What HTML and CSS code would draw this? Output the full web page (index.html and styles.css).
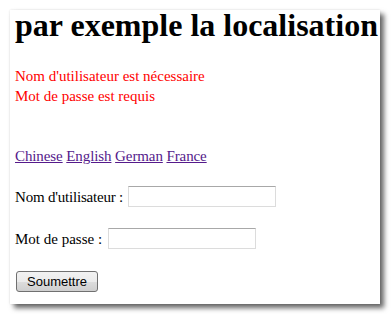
FILE: index.html
```html
<!DOCTYPE html>
<html>
<head>
<meta charset="utf-8">
<link rel="stylesheet" href="styles.css">
</head>
<body>
<div class="card">
  <h1 class="title">par exemple la localisation</h1>
  <div class="errors">
    <div>Nom d'utilisateur est nécessaire</div>
    <div>Mot de passe est requis</div>
  </div>
  <div class="langs">
    <a href="#">Chinese</a> <a href="#">English</a> <a href="#">German</a> <a href="#">France</a>
  </div>
  <form class="form">
    <div class="row row1"><label class="lbl lbl-user">Nom d'utilisateur :</label><input class="field" type="text"></div>
    <div class="row row2"><label class="lbl">Mot de passe :</label><input class="field" type="password"></div>
    <button class="submit" type="button">Soumettre</button>
  </form>
</div>
</body>
</html>
```

FILE: styles.css
```css
html, body {
  margin: 0;
  padding: 0;
  background: #ffffff;
}
body {
  padding: 10px;
  font-family: "Liberation Serif", "Times New Roman", serif;
  font-size: 15px;
  line-height: 20px;
  color: #000;
}
.card {
  width: 370px;
  height: 294px;
  box-sizing: border-box;
  background: #fff;
  padding: 0 0 0 5px;
  box-shadow: 4px 4px 5px rgba(0,0,0,0.6), 0 0 2px rgba(0,0,0,0.12);
  display: flex;
  flex-direction: column;
}
.title {
  margin: 0;
  font-size: 32px;
  line-height: 30px;
  font-weight: bold;
  white-space: nowrap;
}
.errors {
  margin-top: 26px;
  color: #ff0000;
}
.langs {
  margin-top: 40px;
  letter-spacing: -0.1px;
}
.langs a {
  color: #551a8b;
  text-decoration: underline;
}
.form {
  margin: 20px 0 0 0;
  display: flex;
  flex-direction: column;
  align-items: flex-start;
}
.row {
  display: flex;
  align-items: flex-start;
}
.row1 {
  gap: 5px;
}
.row2 {
  margin-top: 21px;
  gap: 6px;
}
.lbl {
  padding-top: 1px;
}
.lbl-user {
  letter-spacing: -0.2px;
}
.field {
  width: 148px;
  height: 21px;
  box-sizing: border-box;
  margin: 0;
  padding: 1px 2px;
  border: 1px solid #dcdcdc;
  border-top-color: #a8a8a8;
  font-family: "Liberation Sans", Arial, sans-serif;
  font-size: 13px;
  background: #fff;
}
.submit {
  margin: 22px 0 0 1px;
  width: 82px;
  height: 21px;
  box-sizing: border-box;
  padding: 0;
  border: 1px solid #707070;
  border-radius: 3px;
  background: linear-gradient(#f2f2f2 0%, #ebebeb 50%, #dddddd 51%, #cfcfcf 100%);
  font-family: "Liberation Sans", Arial, sans-serif;
  font-size: 13px;
  color: #000;
}
```
